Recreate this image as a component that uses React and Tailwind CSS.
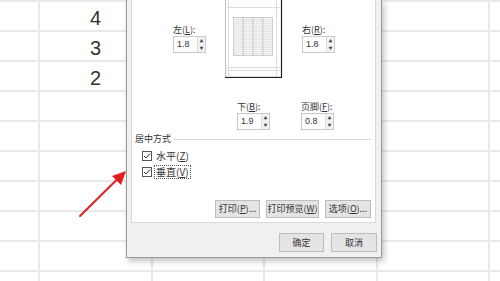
import React from 'react';

const cjk = { fontFamily: '"Noto Sans CJK SC", "Microsoft YaHei", sans-serif' };

const cols = ['w-[40px]', 'w-[113px]', 'w-[112px]', 'w-[113px]', 'w-[112px]', 'flex-1'];
const rows = ['4', '3', '2', '', '', '', '', '', '', ''];

const Spin = ({ value }) => (
  <div className="flex h-[17px] w-[33px] border border-[#c9c9c9] bg-white">
    <div className="flex-1 pl-[3px] text-[9px] leading-[15px] text-[#333]" style={{ fontFamily: 'Arial, "Liberation Sans", sans-serif' }}>{value}</div>
    <div className="flex w-[8px] flex-col border-l border-[#dcdcdc] bg-[#f3f3f3]">
      <div className="flex flex-1 items-center justify-center text-[4px] leading-none text-[#444]">▲</div>
      <div className="flex flex-1 items-center justify-center text-[4px] leading-none text-[#444]">▼</div>
    </div>
  </div>
);

const Field = ({ label, k, value, className = '' }) => (
  <div className={className}>
    <div className="mb-[1px] text-[9px] leading-[11px] text-[#333]">
      {label}(<span className="underline">{k}</span>):
    </div>
    <Spin value={value} />
  </div>
);

const Btn = ({ children, className = '' }) => (
  <div className={`flex items-center justify-center border border-[#bdbdbd] bg-[#e4e4e4] text-[9px] text-[#333] ${className}`}>
    {children}
  </div>
);

const Check = ({ label, k, focus }) => (
  <div className="flex h-[16px] items-center">
    <div className="flex h-[10px] w-[10px] items-center justify-center border border-[#555] bg-white">
      <svg width="8" height="8" viewBox="0 0 8 8"><path d="M1 4 L3 6 L7 1.5" fill="none" stroke="#333" strokeWidth="1" /></svg>
    </div>
    <div className={`ml-[2px] px-[1px] text-[10px] leading-[12px] text-[#333] ${focus ? 'border border-dotted border-[#555]' : 'border border-transparent'}`}>
      {label}(<span className="underline">{k}</span>)
    </div>
  </div>
);

const Preview = () => (
  <svg width="58" height="79" viewBox="0 0 58 79">
    <rect x="0.5" y="-2" width="56" height="79" fill="#fff" stroke="#bbb" />
    <line x1="56.5" y1="0" x2="56.5" y2="78" stroke="#222" strokeWidth="1.2" />
    <line x1="0" y1="77.5" x2="57" y2="77.5" stroke="#222" strokeWidth="1.2" />
    <line x1="3.5" y1="0" x2="3.5" y2="77" stroke="#ddd" />
    <line x1="51.5" y1="0" x2="51.5" y2="77" stroke="#ddd" />
    <line x1="0" y1="7.5" x2="56" y2="7.5" stroke="#ddd" />
    <line x1="0" y1="67.5" x2="56" y2="67.5" stroke="#ddd" />
    <line x1="0" y1="70.5" x2="56" y2="70.5" stroke="#ddd" />
    <rect x="8.5" y="17.5" width="39" height="38" fill="#f4f4f4" stroke="#ccc" />
    {Array.from({ length: 18 }).map((_, i) => (
      <line key={i} x1="8.5" y1={19.5 + i * 2} x2="47.5" y2={19.5 + i * 2} stroke="#dedede" strokeWidth="0.6" />
    ))}
    {[18.2, 28, 37.8].map((x) => (
      <line key={x} x1={x} y1="17.5" x2={x} y2="55.5" stroke="#bbb" strokeWidth="0.8" />
    ))}
  </svg>
);

export default function App() {
  return (
    <div className="relative h-[281px] w-[500px] overflow-hidden bg-white" style={cjk}>
      {/* sheet grid */}
      <div className="border-t-2 border-[#e9e9e9]">
        {rows.map((n, r) => (
          <div key={r} className="flex h-[30px]">
            {cols.map((w, c) => (
              <div key={c} className={`${w} border-b-2 ${c < 5 ? 'border-r-2' : ''} border-[#e9e9e9] text-center text-[20px] leading-[32px] text-[#333]`} style={{ fontFamily: 'Arial, "Liberation Sans", sans-serif' }}>
                {c === 1 ? n : ''}
              </div>
            ))}
          </div>
        ))}
      </div>

      {/* page setup dialog */}
      <div className="absolute left-[126px] top-0 flex h-[258px] w-[256px] flex-col border-x border-b border-[#9a9a9a] bg-[#f0f0f0] pl-[4px] shadow-[2px_3px_6px_rgba(0,0,0,0.25)]">
        <div className="flex h-[223px] w-[245px] flex-col border-x border-b border-[#d9d9d9] bg-white">
          <div className="flex h-[78px] items-start">
            <Field label="左" k="L" value="1.8" className="ml-[41px] mt-[24px]" />
            <div className="ml-[19px]"><Preview /></div>
            <Field label="右" k="R" value="1.8" className="ml-[19px] mt-[24px]" />
          </div>
          <div className="mt-[23px] flex">
            <Field label="下" k="B" value="1.9" className="ml-[105px]" />
            <Field label="页脚" k="F" value="0.8" className="ml-[31px]" />
          </div>
          <div className="mt-[3px] flex items-center pl-[3px] pr-[4px]">
            <span className="text-[9px] leading-[12px] text-[#333]">居中方式</span>
            <div className="ml-[3px] h-px flex-1 bg-[#dcdcdc]" />
          </div>
          <div className="ml-[10px] mt-[3px] flex flex-col">
            <Check label="水平" k="Z" />
            <Check label="垂直" k="V" focus />
          </div>
          <div className="mt-[20px] flex justify-end gap-[6px] pr-[4px]">
            <Btn className="h-[18px] w-[45px]">打印(<span className="underline">P</span>)...</Btn>
            <Btn className="h-[18px] w-[53px]">打印预览(<span className="underline">W</span>)</Btn>
            <Btn className="h-[18px] w-[46px]">选项(<span className="underline">O</span>)...</Btn>
          </div>
        </div>
        <div className="mt-[10px] flex justify-end gap-[7px] pr-[4px]">
          <Btn className="h-[19px] w-[45px] border-[#2a7fd4]">确定</Btn>
          <Btn className="h-[19px] w-[46px]">取消</Btn>
        </div>
      </div>

      {/* red arrow */}
      <svg className="absolute left-0 top-0" width="500" height="281" viewBox="0 0 500 281">
        <line x1="80" y1="216" x2="117" y2="179.5" stroke="#e0201e" strokeWidth="2" strokeLinecap="round" />
        <polygon points="126,171 112,176 121,185" fill="#e0201e" />
      </svg>
    </div>
  );
}
